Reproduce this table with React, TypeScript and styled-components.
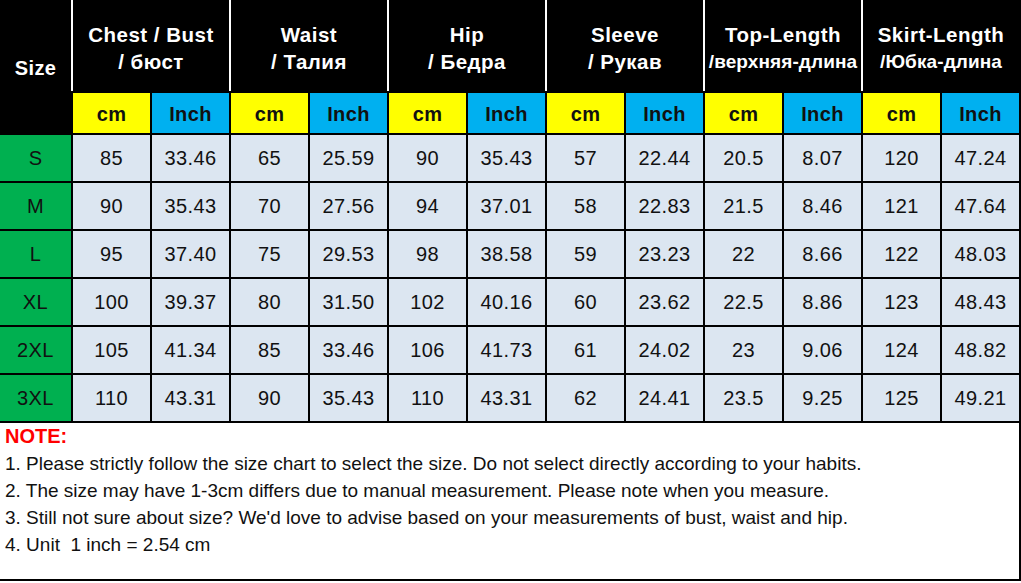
import React from 'react';
import styled, { createGlobalStyle } from 'styled-components';

const GlobalStyle = createGlobalStyle`
    html, body {
        margin: 0;
        padding: 0;
        background: #FFFFFF;
    }
    body {
        font-family: 'Liberation Sans', Arial, sans-serif;
    }
`;

const groups = [
    { top: 'Chest / Bust', bottom: '/ бюст', tight: false },
    { top: 'Waist', bottom: '/ Талия', tight: false },
    { top: 'Hip', bottom: '/ Бедра', tight: false },
    { top: 'Sleeve', bottom: '/ Рукав', tight: false },
    { top: 'Top-Length', bottom: '/верхняя-длина', tight: true },
    { top: 'Skirt-Length', bottom: '/Юбка-длина', tight: true },
];

const rows = [
    ['S', '85', '33.46', '65', '25.59', '90', '35.43', '57', '22.44', '20.5', '8.07', '120', '47.24'],
    ['M', '90', '35.43', '70', '27.56', '94', '37.01', '58', '22.83', '21.5', '8.46', '121', '47.64'],
    ['L', '95', '37.40', '75', '29.53', '98', '38.58', '59', '23.23', '22', '8.66', '122', '48.03'],
    ['XL', '100', '39.37', '80', '31.50', '102', '40.16', '60', '23.62', '22.5', '8.86', '123', '48.43'],
    ['2XL', '105', '41.34', '85', '33.46', '106', '41.73', '61', '24.02', '23', '9.06', '124', '48.82'],
    ['3XL', '110', '43.31', '90', '35.43', '110', '43.31', '62', '24.41', '23.5', '9.25', '125', '49.21'],
];

const notes = [
    '1. Please strictly follow the size chart to select the size. Do not select directly according to your habits.',
    '2. The size may have 1-3cm differs due to manual measurement. Please note when you measure.',
    "3. Still not sure about size? We'd love to advise based on your measurements of bust, waist and hip.",
    '4. Unit  1 inch = 2.54 cm',
];

const App = () => {
    return (
        <>
            <GlobalStyle />
            <Chart>
                <SizeHead>Size</SizeHead>
                {groups.map((g) => (
                    <GroupHead key={g.top}>
                        <HeadLine $tight={g.tight}>{g.top}</HeadLine>
                        <HeadLine $tight={g.tight} $sub>{g.bottom}</HeadLine>
                    </GroupHead>
                ))}
                {groups.map((g) => (
                    <React.Fragment key={g.top + '-unit'}>
                        <UnitCell $tone="cm">cm</UnitCell>
                        <UnitCell $tone="inch">Inch</UnitCell>
                    </React.Fragment>
                ))}
                {rows.map((r) => (
                    <React.Fragment key={r[0]}>
                        <SizeCell>{r[0]}</SizeCell>
                        {r.slice(1).map((v, i) => (
                            <ValueCell key={i}>{v}</ValueCell>
                        ))}
                    </React.Fragment>
                ))}
                <NoteBox>
                    <NoteTitle>NOTE:</NoteTitle>
                    {notes.map((n) => (
                        <NoteLine key={n}>{n}</NoteLine>
                    ))}
                </NoteBox>
            </Chart>
        </>
    );
};

export default App;

const Chart = styled.div`
    display: grid;
    grid-template-columns: 71px repeat(12, 77px);
    grid-template-rows: 91px 40px repeat(6, 46px) 156px;
    gap: 2px;
    width: 1019px;
    padding: 0 2px 2px 0;
    background: #000000;
`;

const Cell = styled.div`
    display: flex;
    align-items: center;
    justify-content: center;
    font-size: 20px;
    letter-spacing: 0.4px;
`;

const SizeHead = styled(Cell)`
    grid-row: span 2;
    padding-top: 4px;
    color: #FFFFFF;
    font-weight: 700;
    background: #000000;
`;

const GroupHead = styled(Cell)`
    grid-column: span 2;
    flex-direction: column;
    padding-top: 4px;
    margin-left: -2px;
    border-left: 2px solid #FFFFFF;
    color: #FFFFFF;
    font-weight: 700;
    line-height: 27px;
    background: #000000;
    white-space: nowrap;
`;

const HeadLine = styled.span<{ $tight?: boolean; $sub?: boolean }>`
    font-size: ${(p) => (p.$tight && p.$sub ? '19px' : '20.5px')};
    letter-spacing: ${(p) => (p.$tight && p.$sub ? '0.1px' : '0.5px')};
`;

const UnitCell = styled(Cell)<{ $tone: 'cm' | 'inch' }>`
    padding-top: 3px;
    font-weight: 700;
    color: #111111;
    background: ${(p) => (p.$tone === 'cm' ? '#FFFF00' : '#00B0F0')};
`;

const SizeCell = styled(Cell)`
    color: #111111;
    background: #00B050;
`;

const ValueCell = styled(Cell)`
    color: #111111;
    background: #DCE6F1;
`;

const NoteBox = styled.div`
    grid-column: 1 / -1;
    display: flex;
    flex-direction: column;
    padding: 0 0 0 5px;
    background: #FFFFFF;
    font-size: 19px;
    line-height: 27px;
    color: #111111;
`;

const NoteTitle = styled.div`
    color: #FF0000;
    font-weight: 700;
    font-size: 20px;
`;

const NoteLine = styled.div`
    white-space: pre;
`;
